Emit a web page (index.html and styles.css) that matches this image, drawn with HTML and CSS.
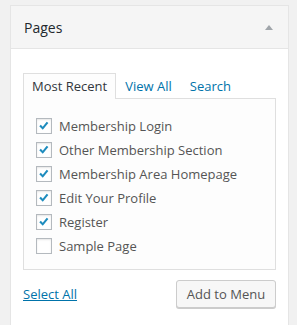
FILE: index.html
```html
<!doctype html>
<html lang="en">
  <head>
    <meta charset="UTF-8" />
    <title>Pages</title>
    <link rel="stylesheet" href="styles.css">
  </head>
  <body>
    <div class="metabox">
      <div class="metabox-head">
        <h3>Pages</h3>
        <span class="toggle-arrow"></span>
      </div>
      <div class="metabox-body">
        <ul class="tabs">
          <li class="tab active">Most Recent</li>
          <li class="tab"><a href="#">View All</a></li>
          <li class="tab"><a href="#">Search</a></li>
        </ul>
        <div class="tabs-panel">
          <label class="item"><span class="check on"><svg viewBox="0 0 16 16"><path d="M2.6 8.4l1.8-1.8 2.1 2.2 4.6-5.6 1.9 1.5-6.4 7.6z"/></svg></span>Membership Login</label>
          <label class="item"><span class="check on"><svg viewBox="0 0 16 16"><path d="M2.6 8.4l1.8-1.8 2.1 2.2 4.6-5.6 1.9 1.5-6.4 7.6z"/></svg></span>Other Membership Section</label>
          <label class="item"><span class="check on"><svg viewBox="0 0 16 16"><path d="M2.6 8.4l1.8-1.8 2.1 2.2 4.6-5.6 1.9 1.5-6.4 7.6z"/></svg></span>Membership Area Homepage</label>
          <label class="item"><span class="check on"><svg viewBox="0 0 16 16"><path d="M2.6 8.4l1.8-1.8 2.1 2.2 4.6-5.6 1.9 1.5-6.4 7.6z"/></svg></span>Edit Your Profile</label>
          <label class="item"><span class="check on"><svg viewBox="0 0 16 16"><path d="M2.6 8.4l1.8-1.8 2.1 2.2 4.6-5.6 1.9 1.5-6.4 7.6z"/></svg></span>Register</label>
          <label class="item"><span class="check"></span>Sample Page</label>
        </div>
        <div class="actions">
          <a href="#" class="select-all">Select All</a>
          <button class="button">Add to Menu</button>
        </div>
      </div>
    </div>
  </body>
</html>
```

FILE: styles.css
```css
body {
  margin: 0;
  padding: 5px 8px 0 10px;
  background: #f1f1f1;
  font-family: "Open Sans", sans-serif;
  font-size: 13px;
  color: #444;
}
.metabox {
  background: #fff;
  border: 1px solid #e5e5e5;
  border-bottom: none;
  height: 330px;
}
.metabox-head {
  display: flex;
  align-items: center;
  justify-content: space-between;
  height: 42px;
  padding: 0 15px 0 13px;
  background: #f5f5f5;
  border-bottom: 1px solid #e5e5e5;
}
.metabox-head h3 {
  margin: 0;
  font-size: 14px;
  font-weight: 400;
  color: #23282d;
}
.toggle-arrow {
  width: 0;
  height: 0;
  border-left: 4px solid transparent;
  border-right: 4px solid transparent;
  border-bottom: 5px solid #a0a5aa;
}
.metabox-body {
  padding: 24px 12px 0 12px;
}
.tabs {
  display: flex;
  list-style: none;
  margin: 0;
  padding: 0;
  position: relative;
  z-index: 1;
  margin-bottom: -1px;
}
.tab {
  padding: 0 8px;
  height: 24px;
  line-height: 24px;
  border: 1px solid transparent;
  border-bottom: none;
}
.tab.active {
  border-color: #dfdfdf;
  background: #fdfdfd;
  color: #32373c;
  height: 25px;
}
.tab a {
  color: #0073aa;
  text-decoration: none;
}
.tabs-panel {
  border: 1px solid #dfdfdf;
  background: #fdfdfd;
  padding: 15px 12px 11px 12px;
}
.item {
  display: flex;
  align-items: center;
  height: 24px;
  color: #555;
}
.check {
  box-sizing: border-box;
  width: 16px;
  height: 16px;
  margin-right: 7px;
  border: 1px solid #b4b9be;
  background: #fff;
  box-shadow: inset 0 1px 2px rgba(0, 0, 0, 0.1);
  display: flex;
  align-items: center;
  justify-content: center;
}
.check svg {
  width: 14px;
  height: 14px;
  fill: #1e8cbe;
}
.actions {
  display: flex;
  align-items: center;
  justify-content: space-between;
  margin-top: 10px;
}
.select-all {
  color: #0073aa;
  text-decoration: underline;
}
.button {
  box-sizing: border-box;
  font-family: "Open Sans", sans-serif;
  font-size: 13px;
  color: #555;
  background: #f7f7f7;
  border: 1px solid #ccc;
  border-radius: 3px;
  box-shadow: 0 1px 0 #ccc;
  height: 28px;
  width: 100px;
  padding: 0 0 1px;
  white-space: nowrap;
}
```
